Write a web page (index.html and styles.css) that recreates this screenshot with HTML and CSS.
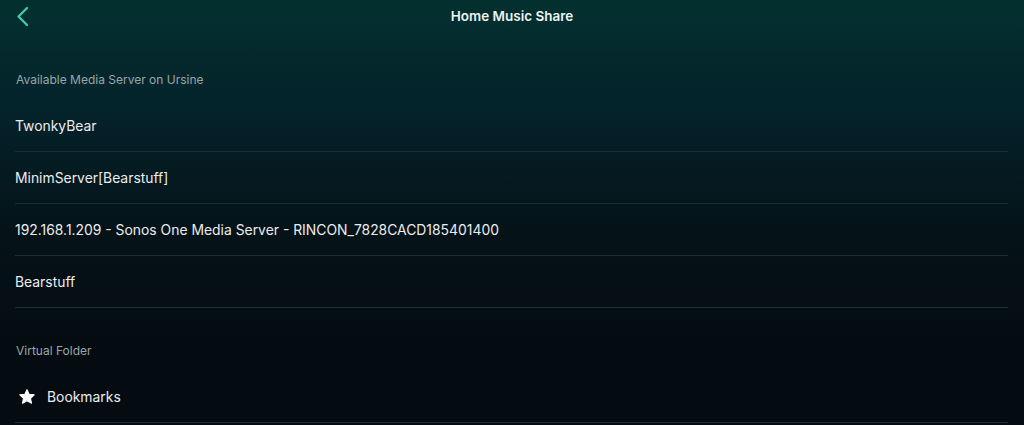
FILE: index.html
```html
<!DOCTYPE html>
<html lang="en">
<head>
    <meta charset="UTF-8">
    <meta name="viewport" content="width=device-width, initial-scale=1.0">
    <title>Home Music Share</title>
    <link rel="stylesheet" href="styles.css">
</head>
<body>
    <header class="navbar">
        <button class="back-btn" aria-label="Back">
            <svg width="14" height="22" viewBox="0 0 14 22">
                <polyline points="11,3 2.5,11.5 11,20" fill="none" stroke="#3ecbab" stroke-width="2.4" stroke-linecap="round" stroke-linejoin="round"/>
            </svg>
        </button>
        <h1 class="nav-title">Home Music Share</h1>
        <div></div>
    </header>

    <section>
        <h2 class="section-title first">Available Media Server on Ursine</h2>
        <ul class="list">
            <li class="row">TwonkyBear</li>
            <li class="row">MinimServer[Bearstuff]</li>
            <li class="row">192.168.1.209 - Sonos One Media Server - RINCON_7828CACD185401400</li>
            <li class="row">Bearstuff</li>
        </ul>
    </section>

    <section>
        <h2 class="section-title">Virtual Folder</h2>
        <ul class="list">
            <li class="row with-icon">
                <svg class="row-icon" width="18" height="18" viewBox="0 0 24 24">
                    <path d="M12 2.2l2.9 6.1 6.7.8-4.9 4.6 1.3 6.6L12 17l-6 3.3 1.3-6.6-4.9-4.6 6.7-.8z" fill="#fff" stroke="#fff" stroke-width="1.4" stroke-linejoin="round"/>
                </svg>
                Bookmarks
            </li>
        </ul>
    </section>
</body>
</html>
```

FILE: styles.css
```css
html {
    height: 100%;
}
body {
    margin: 0;
    min-height: 100%;
    background: linear-gradient(to bottom, #03302f 0px, #04222a 110px, #051319 230px, #040c12 340px, #040c11 425px);
    color: #ececec; /* row text */
    font-family: Inter, "Noto Sans", sans-serif;
    -webkit-font-smoothing: antialiased;
}
.navbar {
    display: grid;
    grid-template-columns: 1fr auto 1fr;
    align-items: center;
    height: 32px;
}
.back-btn {
    justify-self: start;
    display: flex;
    margin-left: 16px;
    padding: 0;
    border: 0;
    background: none;
}
.nav-title {
    margin: 0;
    font-size: 13.5px;
    font-weight: 600;
    color: #eef3f3;
}
.section-title {
    margin: 0;
    padding: 35px 0 12px 16px;
    font-size: 12px;
    line-height: 16px;
    font-weight: 400;
    color: #9aa6a8;
}
.section-title.first {
    padding-top: 40px;
}
.list {
    list-style: none;
    margin: 0 16px 0 15px;
    padding: 0;
}
.row {
    display: flex;
    align-items: center;
    height: 51px;
    border-bottom: 1px solid #1c2e31;
    font-size: 13.9px;
}
.with-icon {
    gap: 11px;
}
.row-icon {
    margin-left: 3px;
}
```
